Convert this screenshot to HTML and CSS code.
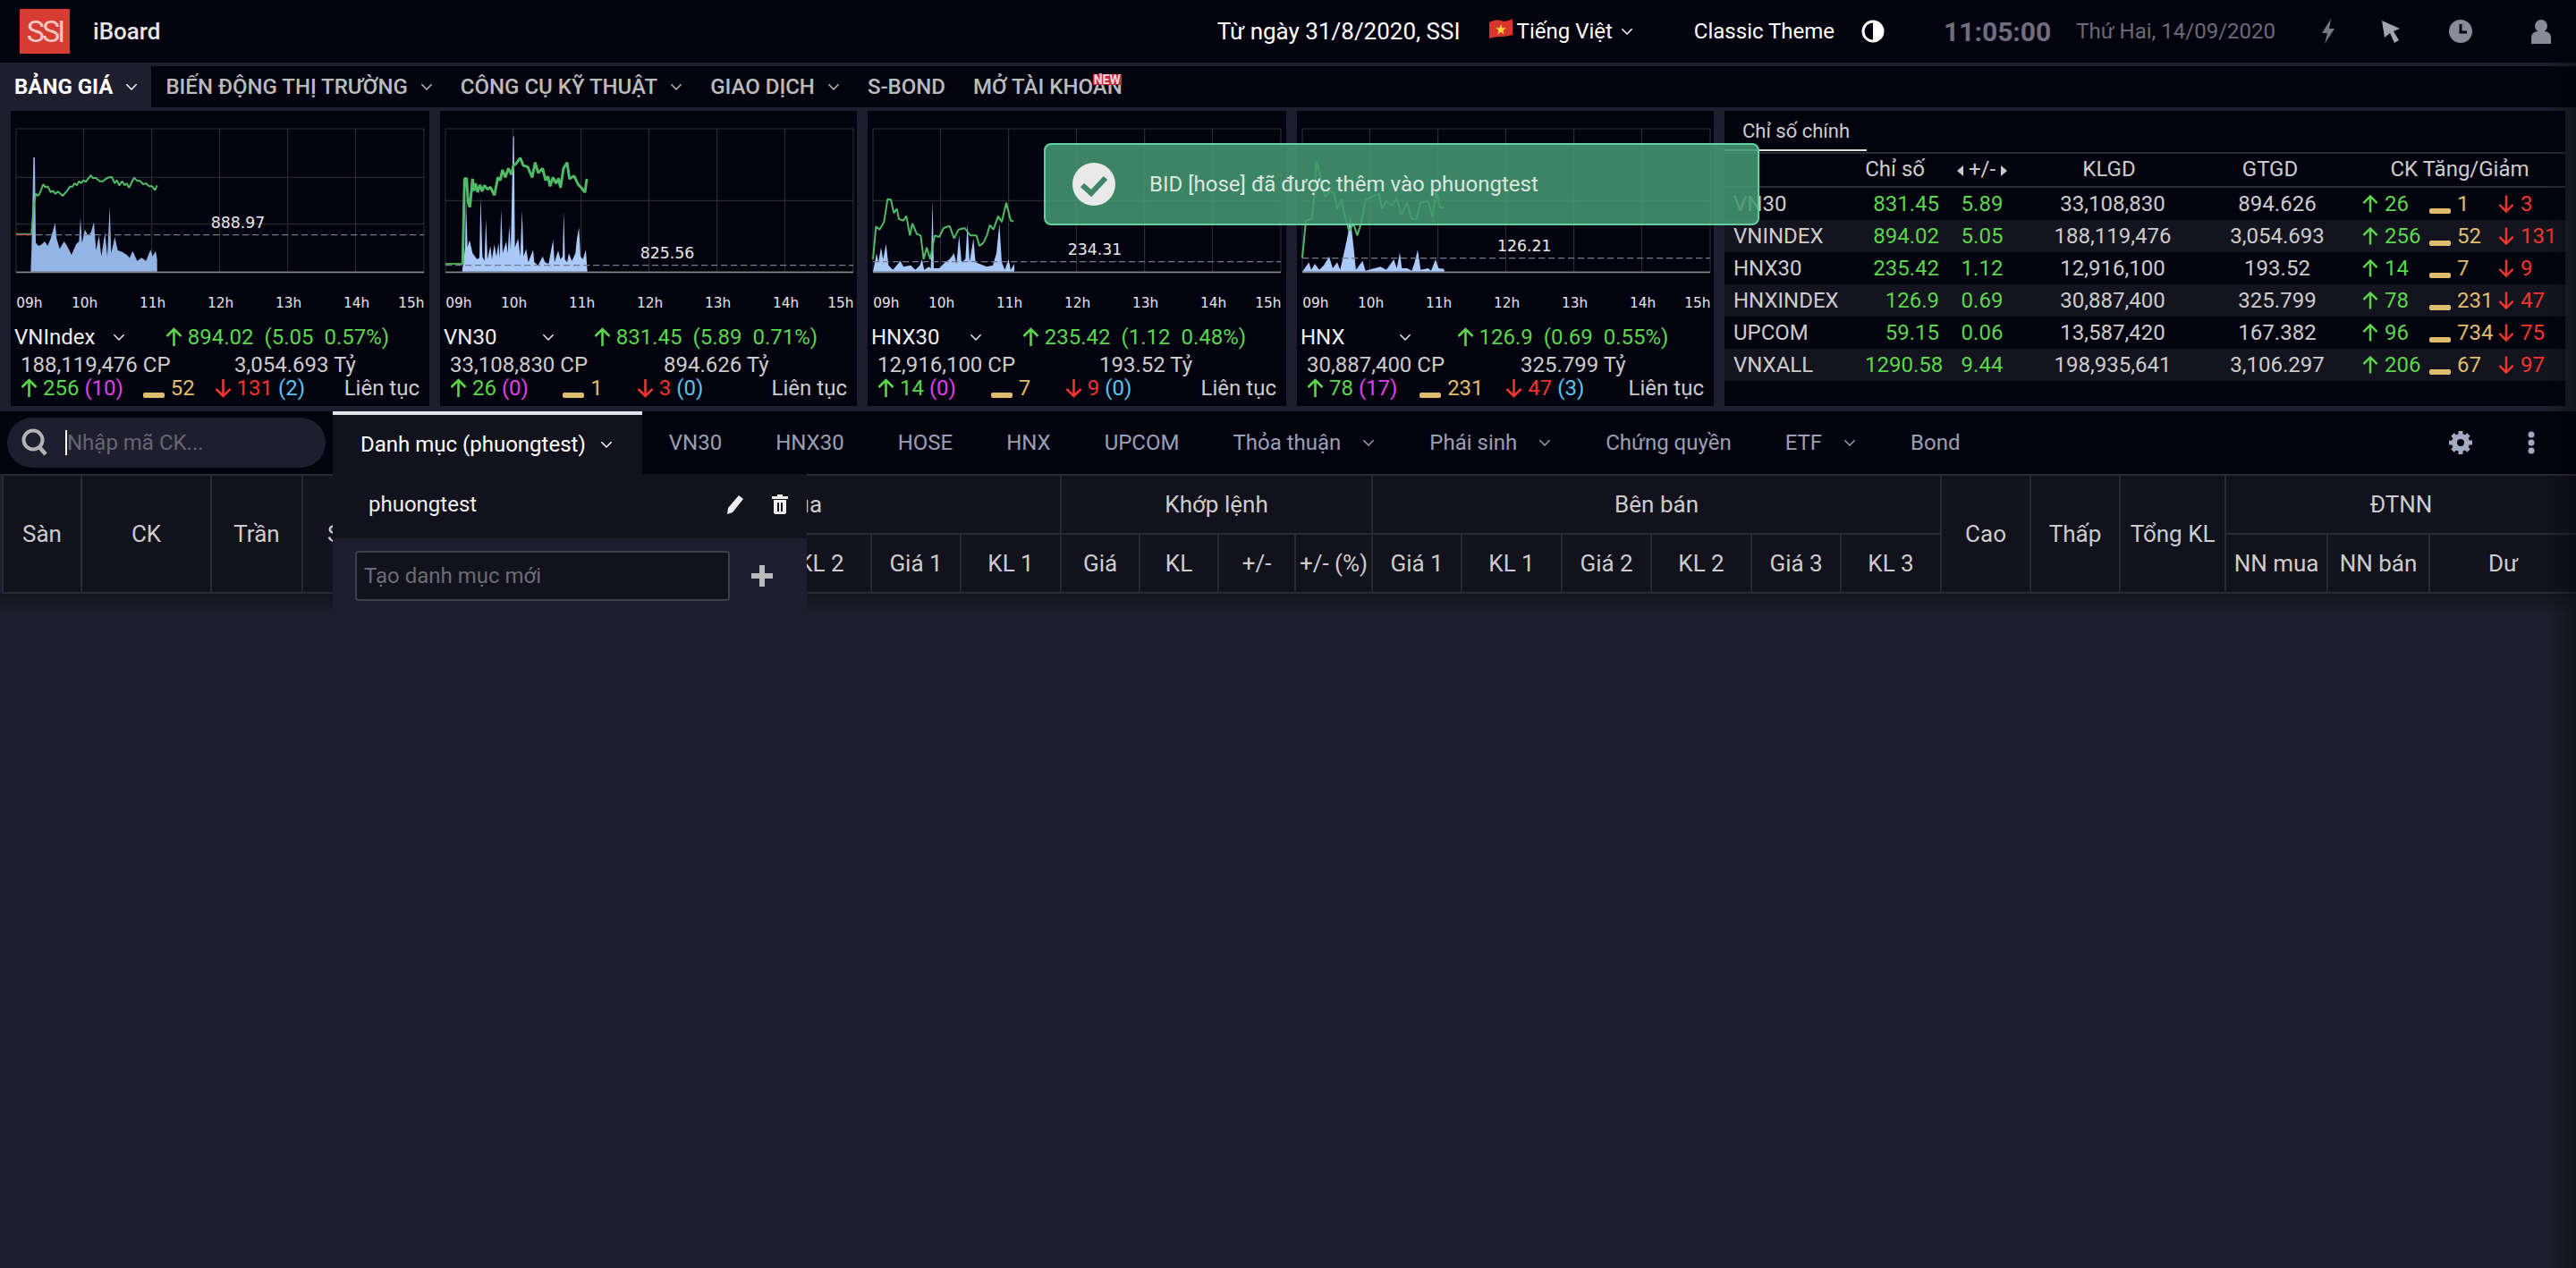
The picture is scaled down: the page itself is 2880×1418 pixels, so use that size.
FILE: index.html
```html
<!DOCTYPE html>
<html lang="vi">
<head>
<meta charset="utf-8">
<title>SSI iBoard</title>
<link rel="stylesheet" href="styles.css">
</head>
<body>

<svg class="defs" width="0" height="0">
  <symbol id="up" viewBox="0 0 19 22"><path d="M9.5 21V2M1.5 10l8-8 8 8" fill="none" stroke="currentColor" stroke-width="2.6"/></symbol>
  <symbol id="down" viewBox="0 0 19 22"><path d="M9.5 1v19M1.5 12l8 8 8-8" fill="none" stroke="currentColor" stroke-width="2.6"/></symbol>
  <symbol id="chev" viewBox="0 0 12 8"><path d="M1 1.2l5 5 5-5" fill="none" stroke="currentColor" stroke-width="1.3"/></symbol>
  <g id="plotgrid" fill="none" stroke="#333338" stroke-width="3">
    <rect x="0" y="72" width="1368" height="480"/>
    <path d="M227 72v480M455 72v480M683 72v480M911 72v480M1139 72v480"/>
  </g>
  <g id="plotaxis">
    <path d="M0 553.500h1368" stroke="#8a8a8a" stroke-width="5"/>
    <g class="tick">
      <text x="1" y="671">09h</text><text x="186" y="671">10h</text><text x="414" y="671">11h</text><text x="642" y="671">12h</text><text x="870" y="671">13h</text><text x="1098" y="671">14h</text><text x="1282" y="671">15h</text>
    </g>
  </g>
</svg>

<header class="topbar">
  <div class="brand">
    <div class="logo">SSI</div>
    <span class="brand-name">iBoard</span>
  </div>
  <div class="topright">
    <span class="since">Từ ngày 31/8/2020, SSI</span>
    <span class="lang">
      <svg class="flag" width="26" height="22" viewBox="0 0 26 22"><path d="M0 4q7-4 13-2t13-2v18q-7 2-13 2t-13 2z" fill="#d8352f"/><path d="M13 6l1.500 4.300h4.500l-3.600 2.700 1.300 4.400-3.700-2.600-3.700 2.600 1.300-4.400-3.600-2.700h4.500z" fill="#f5d63d"/></svg>
      Tiếng Việt
      <svg class="chev"><use href="#chev"/></svg>
    </span>
    <span class="theme">Classic Theme</span>
    <svg class="theme-ico" width="26" height="26" viewBox="0 0 26 26"><circle cx="13" cy="13" r="11" fill="none" stroke="#fff" stroke-width="3"/><path d="M13 2a11 11 0 0 1 0 22z" fill="#fff"/></svg>
    <span class="clock">11:05:00</span>
    <span class="date">Thứ Hai, 14/09/2020</span>
    <svg class="tool bolt" width="18" height="28" viewBox="0 0 18 28"><path d="M12 0L2 16h6L5 28 16 11h-6z" fill="#77777f"/></svg>
    <svg class="tool pointer" width="24" height="28" viewBox="0 0 24 28"><path d="M2 2l20 9-7 3 6 10-5 3-5-11-6 5z" fill="#a4a4b0"/></svg>
    <svg class="tool hist" width="28" height="28" viewBox="0 0 28 28"><circle cx="14" cy="14" r="13" fill="#8a8a98"/><path d="M14 6v9h7" fill="none" stroke="#03030f" stroke-width="3"/></svg>
    <svg class="tool user" width="24" height="28" viewBox="0 0 24 28"><circle cx="12" cy="8" r="7" fill="#8a8a98"/><path d="M1 28v-7q0-6 7-7h8q7 1 7 7v7z" fill="#8a8a98"/></svg>
  </div>
</header>

<nav class="mainnav">
  <a class="nav-item active">BẢNG GIÁ <svg class="chev"><use href="#chev"/></svg></a>
  <a class="nav-item">BIẾN ĐỘNG THỊ TRƯỜNG <svg class="chev"><use href="#chev"/></svg></a>
  <a class="nav-item">CÔNG CỤ KỸ THUẬT <svg class="chev"><use href="#chev"/></svg></a>
  <a class="nav-item">GIAO DỊCH <svg class="chev"><use href="#chev"/></svg></a>
  <a class="nav-item">S-BOND</a>
  <a class="nav-item">MỞ TÀI KHOẢN<span class="new">NEW</span></a>
</nav>

<section class="market">
  <!-- VNIndex -->
  <div class="card card-a">
    <svg class="chart" viewBox="36 12 1404 696">
      <g transform="translate(54 0)"><use href="#plotgrid"/></g>
      <path d="M54 235h1368M54 391h1368" stroke="#333338" stroke-width="3"/>
      <polygon class="vol-a" points="54,551 103,551 106,470 112,168 117,168 120,455 130,465 140,460 150,450 160,465 170,440 185,388 190,440 200,475 215,450 225,465 240,495 255,460 265,450 270,370 275,455 285,410 295,430 305,420 315,385 322,480 332,430 340,500 352,420 360,500 368,332 373,490 385,435 395,480 410,485 425,495 435,505 445,482 460,515 475,505 490,515 505,478 512,500 522,482 527,510 527,551"/>
      <path class="ref" d="M54 428h1368"/>
      <path d="M54 427.500h52" stroke="#e0403a" stroke-width="3"/>
      <path d="M54 424h52" stroke="#55b868" stroke-width="3"/>
      <polyline class="line" points="106,425 112,340 120,290 128,297 135,285 145,258 152,268 160,265 170,285 178,280 185,290 195,283 210,297 225,280 235,265 242,268 250,255 258,262 265,248 272,255 280,245 288,250 295,240 305,228 312,238 320,236 335,248 345,248 355,240 365,235 375,234 385,255 392,245 400,262 410,248 418,262 425,255 433,270 440,255 450,236 460,247 470,247 480,258 490,255 500,265 510,265 520,278 527,262"/>
      <text class="ref-label" x="707" y="406">888.97</text>
      <g transform="translate(54 0)"><use href="#plotaxis"/></g>
    </svg>
    <div class="row-title">
      <span class="idx-name">VNIndex <svg class="chev"><use href="#chev"/></svg></span>
      <span class="idx-val up"><svg class="arrow"><use href="#up"/></svg> 894.02&nbsp; (5.05&nbsp; 0.57%)</span>
    </div>
    <div class="row-vol"><span>188,119,476 CP</span><span>3,054.693 Tỷ</span></div>
    <div class="row-breadth">
      <span class="up"><svg class="arrow"><use href="#up"/></svg> 256 <b class="ceil">(10)</b></span>
      <span class="same"><i class="bar"></i>52</span>
      <span class="down"><svg class="arrow"><use href="#down"/></svg> 131 <b class="floor">(2)</b></span>
      <span></span>
      <span class="status">Liên tục</span>
    </div>
  </div>

  <!-- VN30 -->
  <div class="card card-b">
    <svg class="chart" viewBox="36 12 1398 696">
      <g transform="translate(54 0)"><use href="#plotgrid"/></g>
      <path d="M54 313h1368" stroke="#333338" stroke-width="3"/>
      <polygon class="vol-b" points="54,551 110,551 120,470 123,300 128,470 135,445 145,490 160,510 168,505 172,300 178,500 185,515 190,375 195,510 205,465 210,510 218,460 225,500 232,455 236,505 241,342 246,490 258,450 263,490 268,395 273,480 281,98 284,98 287,470 298,440 305,500 311,345 316,500 325,475 332,520 348,478 352,520 365,530 380,500 388,520 400,525 415,445 420,520 432,480 440,510 447,500 451,348 455,510 462,520 468,490 478,515 490,490 495,440 502,403 507,500 515,510 525,478 530,551"/>
      <path class="ref" d="M54 530h1368"/>
      <path d="M54 525h58" stroke="#58c860" stroke-width="5"/>
      <polyline class="line thick" points="112,525 118,240 125,238 130,320 136,335 145,240 150,280 155,255 162,285 170,260 177,282 185,262 195,275 205,268 218,295 230,235 238,245 245,210 255,235 265,205 275,225 282,195 290,190 305,170 315,195 330,200 345,235 355,185 365,220 380,205 390,245 398,232 405,265 415,235 425,255 433,238 440,270 450,205 462,185 470,240 485,230 500,260 510,270 522,285 528,240"/>
      <text class="ref-label" x="707" y="508">825.56</text>
      <g transform="translate(54 0)"><use href="#plotaxis"/></g>
    </svg>
    <div class="row-title">
      <span class="idx-name">VN30 <svg class="chev"><use href="#chev"/></svg></span>
      <span class="idx-val up"><svg class="arrow"><use href="#up"/></svg> 831.45&nbsp; (5.89&nbsp; 0.71%)</span>
    </div>
    <div class="row-vol"><span>33,108,830 CP</span><span>894.626 Tỷ</span></div>
    <div class="row-breadth">
      <span class="up"><svg class="arrow"><use href="#up"/></svg> 26 <b class="ceil">(0)</b></span>
      <span class="same"><i class="bar"></i>1</span>
      <span class="down"><svg class="arrow"><use href="#down"/></svg> 3 <b class="floor">(0)</b></span>
      <span></span>
      <span class="status">Liên tục</span>
    </div>
  </div>

  <!-- HNX30 -->
  <div class="card card-c">
    <svg class="chart" viewBox="30 12 1404 696">
      <g transform="translate(48 0)"><use href="#plotgrid"/></g>
      <path d="M48 313h1368" stroke="#333338" stroke-width="3"/>
      <polygon class="vol-b" points="48,551 60,490 66,520 75,470 82,510 92,458 100,530 115,545 140,515 150,535 175,530 190,545 205,530 212,510 220,545 235,535 242,540 248,310 252,540 270,540 290,520 305,510 320,490 328,525 337,430 345,520 358,510 365,390 372,520 385,440 392,520 405,525 430,535 450,530 462,490 472,390 480,520 490,545 503,510 510,545 522,525 522,551"/>
      <path class="ref" d="M48 518h1368"/>
      <polyline class="line" points="48,510 58,400 70,410 85,385 97,308 108,310 118,355 128,340 135,375 150,380 160,365 172,430 180,390 195,425 208,430 218,510 228,470 240,510 255,430 270,435 285,405 305,398 320,440 335,410 355,405 375,430 395,430 405,465 418,455 430,430 440,395 452,410 468,365 480,385 495,320 510,380 520,383"/>
      <text class="ref-label" x="701" y="496">234.31</text>
      <g transform="translate(48 0)"><use href="#plotaxis"/></g>
    </svg>
    <div class="row-title">
      <span class="idx-name">HNX30 <svg class="chev"><use href="#chev"/></svg></span>
      <span class="idx-val up"><svg class="arrow"><use href="#up"/></svg> 235.42&nbsp; (1.12&nbsp; 0.48%)</span>
    </div>
    <div class="row-vol"><span>12,916,100 CP</span><span class="nudge">193.52 Tỷ</span></div>
    <div class="row-breadth">
      <span class="up"><svg class="arrow"><use href="#up"/></svg> 14 <b class="ceil">(0)</b></span>
      <span class="same"><i class="bar"></i>7</span>
      <span class="down"><svg class="arrow"><use href="#down"/></svg> 9 <b class="floor">(0)</b></span>
      <span></span>
      <span class="status">Liên tục</span>
    </div>
  </div>

  <!-- HNX -->
  <div class="card card-d">
    <svg class="chart" viewBox="60 12 1398 696">
      <g transform="translate(78 0)"><use href="#plotgrid"/></g>
      <path d="M78 313h1368" stroke="#333338" stroke-width="3"/>
      <polygon class="vol-b" points="78,551 90,535 100,520 108,545 120,525 135,545 150,530 168,500 180,540 195,520 205,545 215,500 225,455 232,420 238,360 248,450 258,545 280,515 290,548 340,535 360,545 385,510 395,540 405,487 412,540 430,540 445,548 455,520 465,478 475,545 500,540 510,548 525,510 535,540 553,542 555,551"/>
      <path class="ref" d="M78 506h1368"/>
      <polyline class="line" points="78,505 90,380 110,375 118,300 125,185 135,215 145,270 155,300 170,280 185,290 195,340 210,310 220,360 235,415 250,390 262,430 275,390 290,310 310,300 335,290 345,340 360,315 380,330 395,305 410,360 430,320 445,375 460,375 475,320 500,315 515,370 527,280 540,335 553,338"/>
      <text class="ref-label" x="732" y="484">126.21</text>
      <g transform="translate(78 0)"><use href="#plotaxis"/></g>
    </svg>
    <div class="row-title">
      <span class="idx-name">HNX <svg class="chev"><use href="#chev"/></svg></span>
      <span class="idx-val up"><svg class="arrow"><use href="#up"/></svg> 126.9&nbsp; (0.69&nbsp; 0.55%)</span>
    </div>
    <div class="row-vol"><span>30,887,400 CP</span><span>325.799 Tỷ</span></div>
    <div class="row-breadth">
      <span class="up"><svg class="arrow"><use href="#up"/></svg> 78 <b class="ceil">(17)</b></span>
      <span class="same"><i class="bar"></i>231</span>
      <span class="down"><svg class="arrow"><use href="#down"/></svg> 47 <b class="floor">(3)</b></span>
      <span></span>
      <span class="status">Liên tục</span>
    </div>
  </div>

  <!-- Chi so chinh -->
  <div class="card summary">
    <div class="summary-tabs"><span class="summary-tab">Chỉ số chính</span></div>
    <table class="sum-table">
      <colgroup><col class="c-name"><col class="c-idx"><col class="c-chg"><col class="c-kl"><col class="c-gt"><col class="c-ck"></colgroup>
      <thead>
        <tr>
          <th></th>
          <th class="th-idx">Chỉ số</th>
          <th><span class="tri-l"></span>+/-<span class="tri-r"></span></th>
          <th class="th-kl">KLGD</th>
          <th class="th-gt">GTGD</th>
          <th>CK Tăng/Giảm</th>
        </tr>
      </thead>
      <tbody>
        <tr>
          <td class="name">VN30</td><td class="num up">831.45</td><td class="up">5.89</td><td>33,108,830</td><td>894.626</td>
          <td class="ck"><span class="ck-up up"><svg class="arrow-s"><use href="#up"/></svg>26</span><span class="ck-same same"><i class="bar"></i>1</span><span class="ck-down down"><svg class="arrow-s"><use href="#down"/></svg>3</span></td>
        </tr>
        <tr>
          <td class="name">VNINDEX</td><td class="num up">894.02</td><td class="up">5.05</td><td>188,119,476</td><td>3,054.693</td>
          <td class="ck"><span class="ck-up up"><svg class="arrow-s"><use href="#up"/></svg>256</span><span class="ck-same same"><i class="bar"></i>52</span><span class="ck-down down"><svg class="arrow-s"><use href="#down"/></svg>131</span></td>
        </tr>
        <tr>
          <td class="name">HNX30</td><td class="num up">235.42</td><td class="up">1.12</td><td>12,916,100</td><td>193.52</td>
          <td class="ck"><span class="ck-up up"><svg class="arrow-s"><use href="#up"/></svg>14</span><span class="ck-same same"><i class="bar"></i>7</span><span class="ck-down down"><svg class="arrow-s"><use href="#down"/></svg>9</span></td>
        </tr>
        <tr>
          <td class="name">HNXINDEX</td><td class="num up">126.9</td><td class="up">0.69</td><td>30,887,400</td><td>325.799</td>
          <td class="ck"><span class="ck-up up"><svg class="arrow-s"><use href="#up"/></svg>78</span><span class="ck-same same"><i class="bar"></i>231</span><span class="ck-down down"><svg class="arrow-s"><use href="#down"/></svg>47</span></td>
        </tr>
        <tr>
          <td class="name">UPCOM</td><td class="num up">59.15</td><td class="up">0.06</td><td>13,587,420</td><td>167.382</td>
          <td class="ck"><span class="ck-up up"><svg class="arrow-s"><use href="#up"/></svg>96</span><span class="ck-same same"><i class="bar"></i>734</span><span class="ck-down down"><svg class="arrow-s"><use href="#down"/></svg>75</span></td>
        </tr>
        <tr>
          <td class="name">VNXALL</td><td class="num up">1290.58</td><td class="up">9.44</td><td>198,935,641</td><td>3,106.297</td>
          <td class="ck"><span class="ck-up up"><svg class="arrow-s"><use href="#up"/></svg>206</span><span class="ck-same same"><i class="bar"></i>67</span><span class="ck-down down"><svg class="arrow-s"><use href="#down"/></svg>97</span></td>
        </tr>
      </tbody>
    </table>
  </div>
</section>

<div class="toast">
  <svg width="48" height="48" viewBox="0 0 48 48"><circle cx="24" cy="24" r="24" fill="#e9e9e9"/><path d="M11 25l10 9 16-17" fill="none" stroke="#3c8565" stroke-width="6"/></svg>
  <span>BID [hose] đã được thêm vào phuongtest</span>
</div>

<div class="tabbar">
  <div class="search">
    <svg width="30" height="32" viewBox="0 0 30 32"><circle cx="13" cy="13" r="10.500" fill="none" stroke="#b4b4b4" stroke-width="4"/><path d="M20 21l7 8" stroke="#b4b4b4" stroke-width="4.500"/></svg>
    <span class="caret"></span>
    <span class="search-hint">Nhập mã CK...</span>
  </div>
  <a class="tab active">Danh mục (phuongtest) <svg class="chev"><use href="#chev"/></svg></a>
  <a class="tab">VN30</a>
  <a class="tab">HNX30</a>
  <a class="tab">HOSE</a>
  <a class="tab">HNX</a>
  <a class="tab">UPCOM</a>
  <a class="tab">Thỏa thuận <svg class="chev"><use href="#chev"/></svg></a>
  <a class="tab">Phái sinh <svg class="chev"><use href="#chev"/></svg></a>
  <a class="tab">Chứng quyền</a>
  <a class="tab">ETF <svg class="chev"><use href="#chev"/></svg></a>
  <a class="tab">Bond</a>
  <div class="tab-tools">
    <svg width="26" height="26" viewBox="0 0 26 26"><circle cx="13" cy="13" r="7" fill="none" stroke="#a3abc0" stroke-width="6"/><path d="M13 0v26M0 13h26M4 4l18 18M22 4L4 22" stroke="#a3abc0" stroke-width="5" stroke-dasharray="5 16"/></svg>
    <svg width="8" height="26" viewBox="0 0 8 26"><circle cx="4" cy="4" r="3.500" fill="#a3abc0"/><circle cx="4" cy="13" r="3.500" fill="#a3abc0"/><circle cx="4" cy="22" r="3.500" fill="#a3abc0"/></svg>
  </div>
</div>

<div class="dropdown">
  <div class="dd-item">
    <span>phuongtest</span>
    <svg class="dd-edit" width="20" height="22" viewBox="0 0 20 22"><path d="M14 1l5 4L7 20l-6 2 1-7z" fill="#eee"/></svg>
    <svg class="dd-del" width="20" height="22" viewBox="0 0 20 22"><path d="M7 0h6v2h6v3H1V2h6zM3 6h14v14q0 2-2 2H5q-2 0-2-2zM7 9v10h2V9zm4 0v10h2V9z" fill="#eee"/></svg>
  </div>
  <div class="dd-new">
    <div class="dd-input">Tạo danh mục mới</div>
    <svg width="24" height="24" viewBox="0 0 24 24"><path d="M12 0v24M0 12h24" stroke="#bbb" stroke-width="6"/></svg>
  </div>
</div>

<table class="board">
  <colgroup>
    <col class="w88"><col class="w145"><col class="w102"><col class="w100"><col class="w112">
    <col class="w100"><col class="w112"><col class="w100"><col class="w112"><col class="w100"><col class="w112">
    <col class="w88"><col class="w88"><col class="w86"><col class="w86">
    <col class="w100"><col class="w112"><col class="w100"><col class="w112"><col class="w100"><col class="w112">
    <col class="w100"><col class="w100"><col class="w118">
    <col class="w114"><col class="w114"><col class="w165">
  </colgroup>
  <thead>
    <tr>
      <th rowspan="2">Sàn</th><th rowspan="2">CK</th><th rowspan="2">Trần</th><th rowspan="2">Sàn</th><th rowspan="2">TC</th>
      <th colspan="6">Bên mua</th><th colspan="4">Khớp lệnh</th><th colspan="6">Bên bán</th>
      <th rowspan="2">Cao</th><th rowspan="2">Thấp</th><th rowspan="2">Tổng KL</th><th colspan="3">ĐTNN</th>
    </tr>
    <tr>
      <th>Giá 3</th><th>KL 3</th><th>Giá 2</th><th>KL 2</th><th>Giá 1</th><th>KL 1</th>
      <th>Giá</th><th>KL</th><th>+/-</th><th>+/- (%)</th>
      <th>Giá 1</th><th>KL 1</th><th>Giá 2</th><th>KL 2</th><th>Giá 3</th><th>KL 3</th>
      <th>NN mua</th><th>NN bán</th><th>Dư</th>
    </tr>
  </thead>
</table>
<div class="board-shade"></div>
<div class="edge-shade"></div>

</body>
</html>
```

FILE: styles.css
```css
* { box-sizing: border-box; }

html, body {
  margin: 0;
  height: 100%;
}

body {
  position: relative;
  overflow: hidden;
  background: #1e1e2e;
  color: #ccc;
  font-family: Roboto, "Noto Sans", sans-serif;
  font-size: 24px;
}

.defs { position: absolute; }

.chev {
  width: 14px;
  height: 9px;
  color: inherit;
  vertical-align: middle;
}

/* top bar */
.topbar {
  display: flex;
  align-items: center;
  justify-content: space-between;
  height: 70px;
  background: #03030f;
}

.brand {
  display: flex;
  align-items: center;
  padding-left: 22px;
}

.logo {
  width: 56px;
  height: 50px;
  background: #d63c32;
  color: #f0c8c0;
  font-size: 34px;
  line-height: 50px;
  text-align: center;
  letter-spacing: -3px;
}

.brand-name {
  margin-left: 26px;
  color: #e6e6e6;
  font-size: 26px;
  font-weight: 500;
}

.topright {
  display: flex;
  align-items: center;
  color: #fff;
}

.since {
  margin-right: 32px;
  font-size: 26px;
}

.lang {
  display: flex;
  align-items: center;
  gap: 5px;
  margin-right: 68px;
}

.lang .flag { margin-bottom: 6px; }
.lang .chev { margin-left: 4px; }

.theme { margin-right: 30px; }
.theme-ico { margin-right: 66px; }

.clock {
  margin-right: 28px;
  color: #6e6e80;
  font-size: 30px;
  font-weight: 700;
}

.date {
  margin-right: 50px;
  color: #6a6a78;
}

.tool { margin-right: 49px; }
.tool.pointer { margin-right: 52px; }
.tool.hist { margin-right: 64px; }
.tool.user { margin-right: 27px; }

/* main nav */
.mainnav {
  display: flex;
  height: 46px;
  margin-top: 4px;
  background: #03030f;
}

.nav-item {
  position: relative;
  display: flex;
  align-items: center;
  gap: 14px;
  height: 46px;
  padding: 0 15px 0 16px;
  color: #bbb;
  font-weight: 500;
}

.nav-item.active {
  background: #1e1e2e;
  color: #fff;
  font-weight: 700;
}

.new {
  position: absolute;
  top: 9px;
  right: 16px;
  padding: 0 1px;
  background: #c42a3e;
  color: #f6d4d8;
  font-size: 14px;
  font-weight: 700;
  line-height: 12px;
}

/* index cards */
.market {
  display: flex;
  height: 330px;
  margin-top: 4px;
  padding-left: 12px;
}

.card {
  flex: none;
  margin-right: 12px;
  background: #03030f;
}

.card-a { width: 468px; }
.card-b { width: 466px; }
.card-c { width: 468px; }
.card-d { width: 466px; margin-right: 12px; }

.chart {
  display: block;
  width: 100%;
  height: 232px;
  overflow: visible;
}

.tick text {
  fill: #e4e4e4;
  font-family: "DejaVu Sans", sans-serif;
  font-size: 46px;
}

.ref-label {
  fill: #e8e8e8;
  font-family: "DejaVu Sans", sans-serif;
  font-size: 52px;
}

.vol-a { fill: #93b5e6; }
.vol-b { fill: #a9c9fa; }

.ref {
  fill: none;
  stroke: #77778c;
  stroke-width: 4;
  stroke-dasharray: 22 11;
}

.line {
  fill: none;
  stroke: #4fbb66;
  stroke-width: 6;
  stroke-linejoin: bevel;
}

.line.thick { stroke-width: 9; }

.row-title {
  display: flex;
  align-items: center;
  height: 34px;
  margin-top: 4px;
  padding-left: 4px;
}

.idx-name {
  display: flex;
  align-items: center;
  flex: none;
  justify-content: space-between;
  width: 124px;
  margin-right: 12px;
  color: #eee;
}

.idx-val {
  flex: 1;
  padding-right: 12px;
  text-align: center;
}

.row-vol {
  display: grid;
  grid-template-columns: 239px 1fr;
  height: 28px;
  padding-left: 11px;
  line-height: 28px;
}

.row-vol .nudge { margin-left: 9px; }

.row-breadth {
  display: flex;
  justify-content: space-between;
  align-items: center;
  height: 24px;
  padding: 0 11px;
  white-space: nowrap;
}

.status { color: #ccc; }

.up { color: #5bd64c; }
.down { color: #f2342c; }
.same { color: #e0bd6c; }
.ceil { color: #e23ee6; font-weight: 400; }
.floor { color: #5cc4f0; font-weight: 400; }

.arrow {
  width: 19px;
  height: 22px;
  vertical-align: -3px;
}

.arrow-s {
  width: 18px;
  height: 22px;
  margin-right: 7px;
  vertical-align: -3px;
}

.bar {
  display: inline-block;
  width: 24px;
  height: 6px;
  margin-right: 7px;
  border-radius: 2px;
  background: #e0bd6c;
  vertical-align: -3px;
}

/* summary */
.summary {
  flex: none;
  width: 940px;
  margin-right: 0;
}

.summary-tabs {
  height: 48px;
  border-bottom: 2px solid #2a2a35;
}

.summary-tab {
  display: block;
  width: 159px;
  height: 45px;
  padding: 10px 0 0 20px;
  border-bottom: 2px solid #ddd;
  color: #ccc;
  font-size: 22px;
}

.sum-table {
  width: 940px;
  border-collapse: collapse;
  table-layout: fixed;
}

.c-name { width: 157px; }
.c-idx { width: 83px; }
.c-chg { width: 96px; }
.c-kl { width: 196px; }
.c-gt { width: 172px; }
.c-ck { width: 236px; }

.sum-table th {
  height: 37px;
  padding: 0 0 3px;
  border-bottom: 2px solid #2a2a35;
  font-weight: 400;
  color: #ccc;
}

.sum-table .th-idx { padding-right: 16px; text-align: right; }
.sum-table .th-kl { padding-right: 8px; }
.sum-table .th-gt { padding-right: 16px; }

.tri-l, .tri-r {
  display: inline-block;
  border: 6px solid transparent;
  vertical-align: 0;
}

.tri-l { border-right: 7px solid #ccc; border-left: 0; margin-right: 6px; }
.tri-r { border-left: 7px solid #ccc; border-right: 0; margin-left: 6px; }

.sum-table td {
  height: 36px;
  padding: 0;
  text-align: center;
  white-space: nowrap;
}

.sum-table tbody tr:nth-child(even) { background: #14141f; }

.sum-table .name { padding-left: 10px; text-align: left; }
.sum-table .num { text-align: right; }

.ck {
  display: flex;
  align-items: center;
  padding-left: 9px !important;
}

.ck-up { width: 75px; text-align: left; }
.ck-same { width: 77px; text-align: left; }
.ck-down { text-align: left; }

/* toast */
.toast {
  position: absolute;
  top: 160px;
  left: 1167px;
  display: flex;
  align-items: center;
  gap: 38px;
  width: 800px;
  height: 92px;
  padding-left: 30px;
  border: 2px solid #62d0a2;
  border-radius: 8px;
  background: rgba(68, 151, 113, 0.88);
  color: #dce6e1;
}

/* tabs */
.tabbar {
  display: flex;
  align-items: center;
  height: 70px;
  margin-top: 6px;
  background: #03030f;
  color: #9aa0b4;
}

.search {
  display: flex;
  align-items: center;
  flex: none;
  width: 356px;
  height: 56px;
  margin: 0 8px;
  padding-left: 16px;
  border-radius: 28px;
  background: #1e1e2e;
}

.caret {
  width: 2px;
  height: 28px;
  margin-left: 19px;
  background: #fff;
}

.search-hint { color: #666672; }

.tab {
  display: flex;
  align-items: center;
  gap: 24px;
  height: 70px;
  padding: 0 30px;
  white-space: nowrap;
}

.tab:has(.chev) { padding-right: 31px; }

.tab.active {
  gap: 16px;
  padding: 0 33px 0 31px;
  border-top: 4px solid #e4e4ec;
  background: #12121c;
  color: #fff;
}

.tab-tools {
  display: flex;
  align-items: center;
  gap: 62px;
  margin-left: auto;
  padding-right: 46px;
}

/* dropdown */
.dropdown {
  position: absolute;
  top: 530px;
  left: 372px;
  z-index: 2;
  width: 530px;
  height: 156px;
  border-radius: 0 0 6px 6px;
  background: #1e1e2e;
  overflow: hidden;
}

.dd-item {
  display: flex;
  align-items: center;
  height: 72px;
  padding: 0 0 4px 40px;
  background: #12121c;
  color: #eee;
}

.dd-edit { margin-left: auto; }
.dd-del { margin: 0 20px 0 30px; }

.dd-new {
  display: flex;
  align-items: center;
  gap: 24px;
  padding: 14px 0 0 25px;
}

.dd-input {
  width: 419px;
  height: 56px;
  padding-left: 8px;
  border: 2px solid #3f3f4c;
  border-radius: 4px;
  background: #12121c;
  color: #6c6c76;
  line-height: 52px;
}

/* price board */
.board {
  width: 2878px;
  margin-left: 2px;
  border-collapse: collapse;
  table-layout: fixed;
}

.board th {
  height: 66px;
  padding: 0;
  border: 2px solid #2a2a33;
  background: #12121c;
  color: #ccc;
  font-size: 26px;
  font-weight: 400;
  white-space: nowrap;
}

.w86 { width: 86px; }
.w88 { width: 88px; }
.w100 { width: 100px; }
.w102 { width: 102px; }
.w112 { width: 112px; }
.w114 { width: 114px; }
.w118 { width: 118px; }
.w145 { width: 145px; }
.w165 { width: 165px; }

.board-shade {
  height: 24px;
  background: linear-gradient(#15151f, #1e1e2e);
}

.edge-shade {
  position: absolute;
  top: 70px;
  right: 0;
  bottom: 0;
  z-index: 3;
  width: 36px;
  background: linear-gradient(to right, rgba(0, 0, 0, 0), rgba(0, 0, 0, 0.32));
  pointer-events: none;
}
```
